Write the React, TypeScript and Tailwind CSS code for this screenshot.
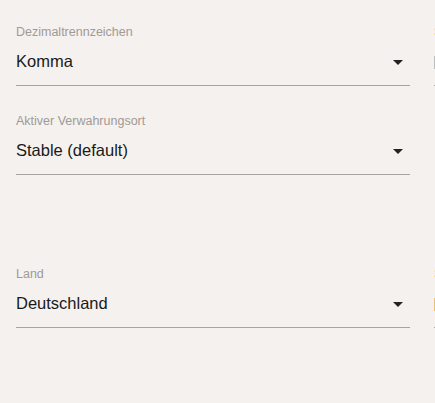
import React from "react";

function Field({ label, value }: { label: string; value: string }) {
  return (
    <div className="flex flex-col">
      <div className="text-[12.5px] leading-[16px] text-[#9f9a97] h-[16px]">{label}</div>
      <div className="flex items-center justify-between h-[40px] mt-[6px] border-b border-[#a7a3a0]">
        <span className="text-[16.5px] leading-[20px] text-[#1a1a1a] -mt-[10px]">{value}</span>
        <svg width="10" height="5" viewBox="0 0 10 5" className="mr-[7px] -mt-[6px]">
          <path d="M0 0 L10 0 L5 5 Z" fill="#222" />
        </svg>
      </div>
    </div>
  );
}

function Side({ bar }: { bar: string }) {
  return (
    <div className="flex flex-col">
      <div className="text-[12.5px] leading-[16px] text-[#e8a050] h-[16px]">Standard</div>
      <div className="h-[40px] mt-[6px] border-b border-[#a7a3a0] flex items-center">
        <div className={`w-[4px] h-[13px] -mt-[6px] ${bar}`} />
      </div>
    </div>
  );
}

export default function App() {
  return (
    <div className="w-[435px] h-[403px] bg-[#f5f1ee] overflow-hidden" style={{ fontFamily: '"Liberation Sans", Arial, sans-serif' }}>
      <div className="grid grid-cols-[394px_394px] gap-x-[24px] pl-[16px] pt-[24px]">
        <Field label="Dezimaltrennzeichen" value="Komma" />
        <Side bar="bg-[#bdbdbd]" />
        <div className="mt-[27px]">
          <Field label="Aktiver Verwahrungsort" value="Stable (default)" />
        </div>
        <div />
        <div className="mt-[91px]">
          <Field label="Land" value="Deutschland" />
        </div>
        <div className="mt-[91px]">
          <Side bar="bg-[#f0c070]" />
        </div>
      </div>
    </div>
  );
}
